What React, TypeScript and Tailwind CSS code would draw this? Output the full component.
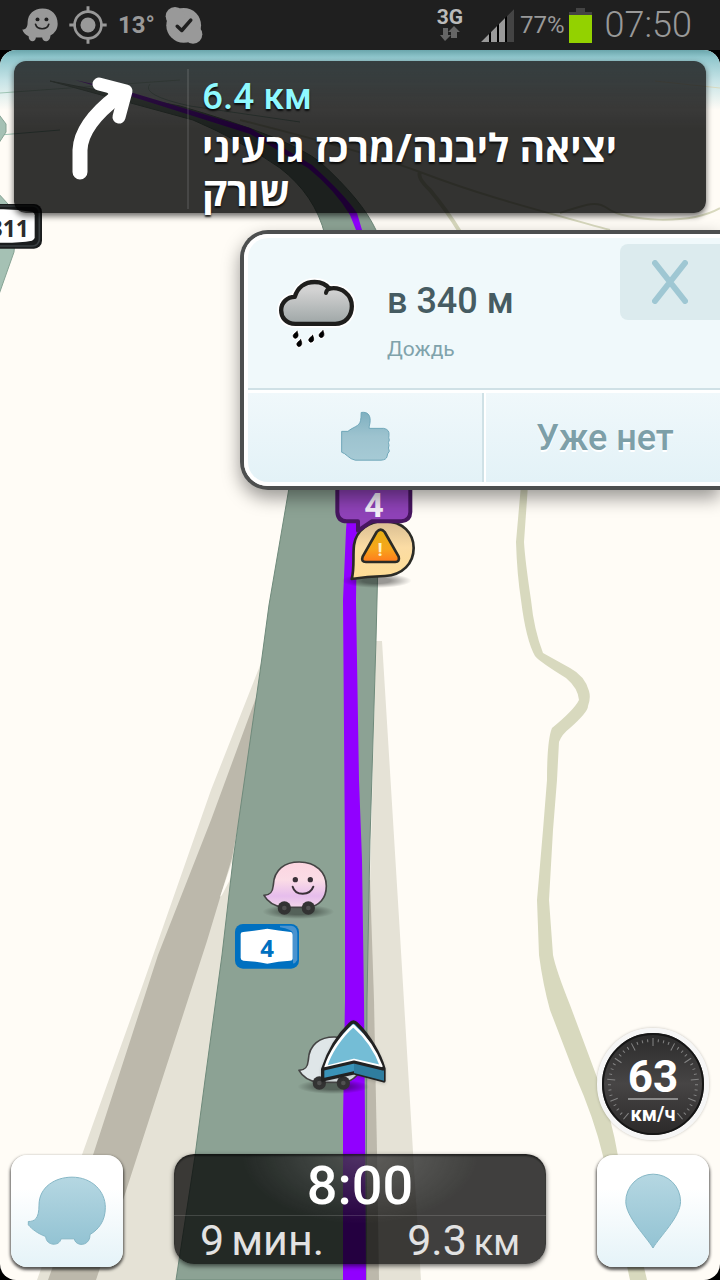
import type { ReactNode } from "react";

const WAZER_PATH =
  "M84 274 C104 274 116 265 116 225 C116 170 165 141 215 141 C275 141 315 183 315 232 C315 272 295 298 269 313 C270 350 225 350 222 326 L182 326 C178 349 138 348 136 319 C112 310 96 298 84 284 Z";

const CAR_PATH =
  "M132 166 C150 166 158 158 160 135 C162 88 195 66 238 66 C288 66 319 97 319 138 C319 175 298 198 265 202 L190 202 C162 198 142 184 132 166 Z";

const StatusBar = () => (
  <header className="flex h-[50px] items-center justify-between bg-[#1f1f1f] pl-[22px] pr-[28px] font-['Roboto',sans-serif] text-[#999]">
    <div className="flex items-center gap-[11px]">
      <svg viewBox="66 23 109 102" className="h-[34px] w-[36px]">
        <path
          d="M67 88 C79 88 83 80 83 66 C84 40 102 24 128 24 C156 24 174 43 174 70 C174 86 166 98 152 106 C152 128 128 128 127 112 L108 112 C108 127 86 128 86 108 C76 104 70 98 67 88 Z"
          fill="#999"
        />
        <circle cx="113" cy="57" r="6" fill="#1f1f1f" />
        <circle cx="140" cy="57" r="6" fill="#1f1f1f" />
        <path d="M107 72 C112 90 142 90 147 72" fill="none" stroke="#1f1f1f" strokeWidth="5" strokeLinecap="round" />
      </svg>
      <svg viewBox="207 17 116 116" className="h-[38px] w-[38px]" fill="none" stroke="#999">
        <circle cx="265" cy="75" r="41" strokeWidth="8" />
        <circle cx="265" cy="75" r="23" fill="#999" stroke="none" />
        <path d="M265 18 V38 M265 112 V132 M208 75 H228 M302 75 H322" strokeWidth="9" />
      </svg>
      <span className="w-9 text-2xl font-bold">13°</span>
      <svg viewBox="493 15 118 118" className="h-[38px] w-[38px]">
        <circle cx="551" cy="75" r="54" fill="#999" />
        <circle cx="524" cy="47" r="29" fill="#999" />
        <circle cx="580" cy="103" r="29" fill="#999" />
        <path d="M531 78 L545 91 L573 59" fill="none" stroke="#1f1f1f" strokeWidth="11" strokeLinecap="round" strokeLinejoin="round" />
      </svg>
    </div>
    <div className="flex items-center gap-[4px]">
      <div className="mr-[14px] flex flex-col items-center">
        <span className="text-[21px] leading-[18px] font-bold text-[#bbb]">3G</span>
        <svg viewBox="0 0 22 16" className="h-4 w-[22px]" fill="#666">
          <path d="M4 2 H9 V9 H12 L6 15 L1 9 H4 Z M12 12 V6 H9 L15 0 L21 6 H18 V12 Z" />
        </svg>
      </div>
      <svg viewBox="357 27 99 99" className="h-[33px] w-[33px]">
        <path d="M357 126 L456 27 V126 Z" fill="#000" />
        <path d="M357 126 L381 102 V126 Z M387 96 L405 78 V126 H387 Z M411 72 L429 54 V126 H411 Z" fill="#999" />
        <path d="M435 48 L456 27 V126 H435 Z" fill="#444" />
      </svg>
      <span className="ml-[2px] text-2xl">77%</span>
      <svg viewBox="0 0 23 35" className="h-[35px] w-[23px]">
        <path d="M7 0 H16 V4 H23 V8 H0 V4 H7 Z" fill="#444" />
        <rect y="7" width="23" height="28" fill="#93d200" />
      </svg>
      <time className="ml-[9px] text-[36px] font-light">07:50</time>
    </div>
  </header>
);

const Car = ({ fill, face }: { fill: string; face?: boolean }) => (
  <>
    <ellipse cx="235" cy="215" rx="108" ry="22" fill="url(#carShadow)" />
    <path d={CAR_PATH} fill={fill} stroke="#444" strokeWidth="5" strokeLinejoin="round" />
    <circle cx="193" cy="204" r="20" fill="#333" />
    <circle cx="265" cy="204" r="20" fill="#333" />
    <circle cx="193" cy="204" r="7" fill="#505050" />
    <circle cx="265" cy="204" r="7" fill="#505050" />
    {face && (
      <>
        <circle cx="226" cy="119" r="8" fill="#3a3038" />
        <circle cx="271" cy="119" r="8" fill="#3a3038" />
        <path d="M218 140 C226 168 270 168 280 140" fill="none" stroke="#3a3038" strokeWidth="6" strokeLinecap="round" />
      </>
    )}
  </>
);

const RoadMap = () => (
  <svg
    viewBox="0 50 720 1230"
    preserveAspectRatio="xMidYMin slice"
    className="absolute inset-0 h-full w-full"
    aria-hidden="true"
  >
    <defs>
      <linearGradient id="sky" x1="0" y1="0" x2="0" y2="1">
        <stop offset="0" stopColor="#6aa5ab" />
        <stop offset="0.12" stopColor="#8fc6cc" />
        <stop offset="0.5" stopColor="#c5e3e6" />
        <stop offset="1" stopColor="#fffcf6" />
      </linearGradient>
      <linearGradient id="pink" x1="0" y1="0" x2="0" y2="1">
        <stop offset="0" stopColor="#fcd5e0" />
        <stop offset="0.4" stopColor="#fbdce6" />
        <stop offset="0.75" stopColor="#e6bdec" />
        <stop offset="1" stopColor="#f3d6ea" />
      </linearGradient>
      <linearGradient id="amber" x1="0" y1="0" x2="0" y2="1">
        <stop offset="0" stopColor="#e4b012" />
        <stop offset="0.6" stopColor="#f7a51c" />
        <stop offset="1" stopColor="#ff7a1c" />
      </linearGradient>
      <linearGradient id="bubble" x1="0" y1="0" x2="0" y2="1">
        <stop offset="0" stopColor="#d8bd92" />
        <stop offset="0.45" stopColor="#fbdca4" />
        <stop offset="1" stopColor="#ffdd94" />
      </linearGradient>
      <radialGradient id="carShadow">
        <stop offset="0.4" stopColor="#000" stopOpacity="0.4" />
        <stop offset="1" stopColor="#000" stopOpacity="0" />
      </radialGradient>
    </defs>

    <rect y="50" width="720" height="1230" fill="#fffcf6" />
    <rect y="50" width="720" height="60" fill="url(#sky)" />

    {/* small roads near the horizon */}
    <g fill="none" stroke="#d8d9be" strokeWidth="2">
      <path d="M0 93 L180 80 M60 130 L0 135 M150 84 Q140 95 190 106 L300 122" strokeWidth="1" stroke="#9fc4b4" />
      <path d="M240 120 Q360 150 420 172 C480 195 530 208 610 230" />
      <path d="M420 172 Q417 178 430 190 Q448 212 460 232" strokeWidth="4" />
      <path d="M560 213 C580 207 595 199 607 208 C625 222 690 225 720 208" />
      <path d="M655 81 L720 88" strokeWidth="1" />
    </g>
    <g fill="#a5c1b4" stroke="#86a394">
      <path d="M-3 112 L6 124 L6 132 L-3 146 Z" />
      <path d="M-3 192 L8 204 L15 240 L14 252 L-3 300 Z" />
    </g>

    <path
      d="M521 485 L516 542 Q517 574 521 600 Q526 640 535 656 Q540 662 566 678 Q578 688 579 700 Q574 710 552 728 Q547 740 547 780 L543 830 L537 900 L539 955 Q543 985 550 1010 L575 1075 Q594 1118 603 1156 L630 1280 H647 L618 1156 Q612 1120 598 1080 L570 1005 Q556 970 553 955 L549 900 L553 830 L557 780 L559 742 Q562 734 570 728 Q588 712 588 706 Q591 698 589 691 Q585 676 570 668 L543 653 Q534 630 531 600 Q525 560 524 542 L528 485 Z"
      fill="#d8d9be"
    />

    {/* side roads under the highway */}
    <path d="M263 658 L211 790 L142 987 L83 1152 L37 1280 H240 L290 660 Z" fill="#e5e2d6" />
    <path d="M257 695 L211 820 L158 955 L94 1152 L48 1280 H96 L125 1194 L207 941 L232 858 L262 695 Z" fill="#bcb8ab" />
    <path d="M234 856 L220 897 L222 895 L236 868 Z" fill="#fffcf6" />
    <path d="M376 641 H382 L399 918 L413 1152 L421 1280 H360 Z" fill="#e5e2d6" />
    <path d="M370 880 L374 1000 L377 1152 L379 1280 H360 V880 Z" fill="#bcb8ab" />

    {/* highway and the route on it */}
    <path
      d="M50 81 L193 120 Q240 140 280 168 Q315 195 325 235 L338 300 L289 488 L269 605 L260 672 L233 860 L222 955 L205 1080 L195 1156 L176 1280 H366 L367 1000 L370 840 L376 640 L378 560 L390 300 L376 230 Q362 200 320 162 Q290 138 180 106 Z"
      fill="#8ca294"
      stroke="#6f8a7b"
    />
    <path d="M75 80 L130 92 L250 128 L312 165 Q345 195 357 213 L365 240 L376 480 L357 530 L356 600 L359 780 L362 860 L364 1000 L365 1120 L366 1280 H343 V1120 L345 1000 V860 L343 600 L346 530 L350 480 L358 235 L350 215 Q335 190 308 168 L250 134 L130 96 Z" fill="#9100ff" />

    {/* road signs */}
    <g transform="translate(0 120) scale(0.3333)">
      <rect x="-70" y="252" width="196" height="134" rx="24" fill="#1b1d1e" />
      <rect x="-64" y="258" width="182" height="120" rx="20" fill="none" stroke="#3b4043" strokeWidth="5" />
      <path d="M-50 272 Q20 262 98 276 Q104 278 104 286 V352 Q104 360 96 362 Q40 372 -50 366 Z" fill="#fff" />
    </g>
    <text x="29" y="237" textAnchor="end" fontSize="23" fill="#2c2c2c" className="font-['Noto_Sans',sans-serif] font-bold">311</text>

    <g transform="translate(220 840) scale(0.3333)">
      <rect x="45" y="252" width="192" height="134" rx="24" fill="#0070c0" />
      <path d="M180 257 H214 Q232 260 232 280 V360 Q225 372 219 370 V280 Q215 268 180 262 Z" fill="#4a93cf" />
      <path d="M62 282 Q62 276 70 276 Q110 272 142 266 Q175 272 212 276 Q218 277 218 284 V356 Q218 362 210 362 Q175 364 142 371 Q105 364 70 362 Q62 361 62 354 Z" fill="#fff" />
      <Car fill="url(#pink)" face />
    </g>
    <text x="267" y="957" textAnchor="middle" fontSize="24" fill="#0070c0" className="font-['Noto_Sans',sans-serif] font-bold">4</text>

    {/* own position */}
    <g transform="translate(255 1015) scale(0.3333)">
      <Car fill="#dfe6e8" />
    </g>
    <g transform="translate(220 840) scale(0.3333)" strokeLinejoin="round">
      <path d="M390 552 Q400 540 411 552 C450 590 480 645 492 686 V723 L402 699 L308 720 V688 C322 645 350 590 390 552 Z" fill="#3a93b8" stroke="#222" strokeWidth="10" className="drop-shadow-lg" />
      <path d="M402 668 L492 690 V722 L402 699 Z" fill="#2f7d9f" />
      <path d="M400 557 C440 592 470 640 484 679 L402 660 L317 681 C330 640 360 592 400 557 Z" fill="#74bdd6" stroke="#fff" strokeWidth="8" />
      <path d="M308 688 L402 666 L492 688" fill="none" stroke="#222" strokeWidth="9" />
    </g>

    {/* hazard pin with the route bubble */}
    <g transform="translate(270 480) scale(0.3333)" strokeLinejoin="round">
      <ellipse cx="320" cy="302" rx="105" ry="22" fill="url(#carShadow)" />
      <path d="M245 297 C254 265 248 230 252 195 C258 150 300 122 345 124 C398 124 431 160 431 204 C431 250 398 285 345 288 Q290 290 245 297 Z" fill="url(#bubble)" stroke="#2b2b26" strokeWidth="8" />
      <path d="M320 156 Q332 142 344 156 L386 230 Q390 246 376 246 H288 Q272 246 278 230 Z" fill="url(#amber)" stroke="#2b2b26" strokeWidth="8" />
      <path d="M202 0 V96 Q204 124 230 124 H264 V152 L305 124 H394 Q420 122 421 96 V0 Z" fill="#8f42b8" stroke="#471660" strokeWidth="12" />
    </g>
    <text x="380" y="556" textAnchor="middle" fontSize="19" fill="#fff3c8" className="font-['Roboto',sans-serif] font-bold">!</text>
    <text x="374" y="517" textAnchor="middle" fontSize="34" fill="#f5eefa" className="font-['Roboto',sans-serif] font-bold">4</text>
  </svg>
);

const NavPanel = () => (
  <section className="mx-[14px] mt-[11px] flex min-h-[152px] rounded-xl bg-black/80 bg-linear-to-b from-white/10 to-transparent to-45% shadow-[0_3px_6px_rgba(0,0,0,0.6)]">
    <div className="mt-2 mb-1 w-[175px] shrink-0 border-r-2 border-white/10">
      <svg viewBox="14 69 174 136" className="h-[136px] w-[174px]" fill="none" stroke="#fff" strokeLinecap="round" strokeLinejoin="round">
        <path d="M80 172 V150 Q81 124 118 96" strokeWidth="15" />
        <path d="M99 84 L126 91 L119 117" strokeWidth="13" />
        <path d="M108 88 L126 91 L120 106 Z" fill="#fff" strokeWidth="6" />
      </svg>
    </div>
    <div className="flex-1 pt-[12px] pl-[13px] pr-10 [text-shadow:0_2px_2px_rgba(0,0,0,0.8)]">
      <p className="font-['Roboto',sans-serif] text-[37px] leading-[48px] font-medium text-[#8ff9ff]">6.4 км</p>
      <p dir="rtl" lang="he" className="pt-1 text-left font-['Open_Sans','Noto_Sans',sans-serif] text-[39px] leading-[44px] font-bold text-white">
        יציאה ליבנה/מרכז גרעיני שורק
      </p>
    </div>
  </section>
);

const RainCloud = () => (
  <svg viewBox="138 170 240 220" className="h-[73px] w-[80px] shrink-0" strokeLinecap="round" strokeLinejoin="round">
    <defs>
      <linearGradient id="cloud" x1="0" y1="0" x2="0" y2="1">
        <stop offset="0.2" stopColor="#d2d2d2" />
        <stop offset="1" stopColor="#9ea6a6" />
      </linearGradient>
    </defs>
    <path d="M196 311 C166 311 153 290 153 270 C153 246 172 230 194 230 C202 202 224 185 254 185 C274 185 288 191 298 205 C336 198 366 224 366 258 C366 288 346 311 316 311 Z" fill="url(#cloud)" stroke="#fff" strokeWidth="24" />
    <path d="M196 311 C166 311 153 290 153 270 C153 246 172 230 194 230 C202 202 224 185 254 185 C274 185 288 191 298 205 C336 198 366 224 366 258 C366 288 346 311 316 311 Z" fill="url(#cloud)" stroke="#1e1e1c" strokeWidth="13" />
    <path d="M300 204 Q289 208 288 218" fill="none" stroke="#1e1e1c" strokeWidth="12" />
    {[[196, 344], [207, 369], [243, 356], [274, 342]].map(([x, y]) => (
      <g key={x}>
        <path d={`M${x + 5} ${y - 10} Q${x + 10} ${y + 8} ${x - 1} ${y + 11} Q${x - 12} ${y + 4} ${x + 5} ${y - 10} Z`} stroke="#fff" strokeWidth="10" fill="#fff" />
        <path d={`M${x + 5} ${y - 10} Q${x + 14} ${y + 8} ${x - 1} ${y + 11} Q${x - 16} ${y + 4} ${x + 5} ${y - 10} Z`} fill="#000" stroke="#000" strokeWidth="2" />
      </g>
    ))}
  </svg>
);

const AlertCard = () => (
  <section className="mt-[17px] w-2/3 self-end rounded-l-[28px] border-4 border-r-0 border-[#4d4f4f] bg-white shadow-[0_8px_18px_rgba(0,0,0,0.4)]">
    <div className="flex flex-col overflow-hidden rounded-l-[24px] border-y-4 border-l-4 border-white">
      <div className="flex h-[152px] border-b-2 border-[#cfe1e6] bg-[#f0f9fb]">
        <div className="mt-[39px] ml-[28px]">
          <RainCloud />
        </div>
        <div className="mt-[38px] ml-[31px] flex-1 font-['Roboto',sans-serif]">
          <h2 className="text-[36px] leading-[50px] font-medium text-[#465c62]">в 340 м</h2>
          <p className="mt-[11px] text-[21px] leading-6 text-[#7fa3ab]">Дождь</p>
        </div>
        <button type="button" aria-label="Закрыть" className="mt-[6px] flex h-[76px] w-[100px] items-center justify-center rounded-l-lg bg-[#dcebee]">
          <svg viewBox="0 0 36 44" className="h-11 w-9" stroke="#9fc7d3" strokeWidth="6" strokeLinecap="round">
            <path d="M3 3 L33 41 M33 3 L3 41" />
          </svg>
        </button>
      </div>
      <div className="mt-[3px] flex h-[89px]">
        <button type="button" aria-label="Подтвердить" className="flex w-1/2 items-center justify-center border-r-2 border-[#cfe1e6] bg-linear-to-b from-[#f0f8fb] to-[#e3f2f7] pb-1">
          <svg viewBox="326 566 154 156" className="h-[52px] w-[51px]">
            <defs>
              <linearGradient id="thumb" x1="0" y1="0" x2="0" y2="1">
                <stop offset="0" stopColor="#7fb0c0" />
                <stop offset="0.5" stopColor="#9dc3cf" />
                <stop offset="1" stopColor="#a6cad5" />
              </linearGradient>
            </defs>
            <path
              d="M331 630 H350 C366 616 384 616 388 598 Q390 590 390 573 C408 570 418 580 417 598 C417 608 413 615 414 621 H458 Q476 624 474 642 Q472 650 475 656 Q470 664 474 672 Q470 680 475 690 Q468 698 468 706 Q466 716 450 717 H372 Q358 714 348 704 Q340 696 331 693 Z"
              fill="url(#thumb)"
              stroke="#6fa6b8"
              strokeWidth="3"
            />
          </svg>
        </button>
        <button type="button" className="ml-[2px] flex-1 bg-linear-to-b from-[#f0f8fb] to-[#e3f2f7] pl-1 font-['Roboto',sans-serif] text-[36px] font-medium text-[#7d9fa8] [text-shadow:0_2px_0_#fff]">
          Уже нет
        </button>
      </div>
    </div>
  </section>
);

const ticks = Array.from({ length: 41 }, (_, i) => -140 + i * 7);

const Speedometer = () => (
  <div className="relative mr-[11px] mb-[15px] flex size-28 flex-col items-center self-end rounded-full border-5 border-[#f6f6f6] bg-linear-to-b from-[#2b2b2b] via-[#474545] to-[#2b2929] shadow-[0_0_3px_rgba(0,0,0,0.25)]">
    <svg viewBox="-51 -51 102 102" className="absolute inset-0 h-full w-full" aria-hidden="true">
      <circle r="50" fill="none" stroke="#161616" strokeWidth="2" />
      {ticks.map((angle, i) => (
        <path key={angle} d={i % 4 === 0 ? "M0 -46 V-38" : "M0 -45 V-42"} stroke="#858585" transform={`rotate(${angle})`} />
      ))}
    </svg>
    <span className="relative mt-[23px] border-b-2 border-[#8a8a8a] font-['Roboto',sans-serif] text-[44px] leading-[42px] font-bold text-white">63</span>
    <span className="relative mt-[2px] font-['Roboto',sans-serif] text-xl leading-6 font-bold text-white">км/ч</span>
  </div>
);

const MapButton = ({ label, children }: { label: string; children: ReactNode }) => (
  <button
    type="button"
    aria-label={label}
    className="flex size-28 shrink-0 items-center justify-center rounded-2xl bg-linear-to-b from-white from-30% to-[#e5f3f8] shadow-[0_2px_3px_1px_rgba(0,0,0,0.65)]"
  >
    {children}
  </button>
);

const EtaPanel = () => (
  <section className="mx-[51px] -mt-px flex h-[110px] flex-1 flex-col rounded-[20px] bg-black/75 bg-[radial-gradient(ellipse_at_top,rgba(255,255,255,0.2),transparent_45%)] font-['Roboto',sans-serif] shadow-[0_2px_5px_rgba(0,0,0,0.6),inset_0_2px_2px_rgba(0,0,0,0.5)]">
    <div className="h-[62px] border-b border-white/15 text-center text-[54px] leading-[64px] font-medium text-white">8:00</div>
    <div className="flex flex-1 items-baseline justify-between pr-[26px] pl-[26px] leading-[48px] text-[#e2e2e2]">
      <p className="flex items-baseline gap-[7px] text-[43px]">
        <span>9</span>
        <span>мин.</span>
      </p>
      <p className="flex items-baseline gap-[7px] text-[43px]">
        <span>9.3</span>
        <span className="text-[36px]">км</span>
      </p>
    </div>
  </section>
);

export default function App() {
  return (
    <div className="flex min-h-screen flex-col bg-black">
      <StatusBar />
      <main className="relative flex flex-1 flex-col overflow-hidden rounded-2xl">
        <RoadMap />
        <div className="relative flex flex-1 flex-col">
          <NavPanel />
          <AlertCard />
          <div className="flex-1" />
          <Speedometer />
          <footer className="flex items-start px-[11px] pb-[13px]">
            <MapButton label="Меню">
              <svg viewBox="80 135 240 215" className="h-[72px] w-[80px]">
                <defs>
                  <linearGradient id="aqua" x1="0" y1="0" x2="0" y2="1">
                    <stop offset="0" stopColor="#b5d7e2" />
                    <stop offset="1" stopColor="#93c3d3" />
                  </linearGradient>
                </defs>
                <path d={WAZER_PATH} fill="url(#aqua)" stroke="#85b6c5" strokeWidth="3" />
              </svg>
            </MapButton>
            <EtaPanel />
            <MapButton label="Сообщить">
              <svg viewBox="130 485 180 235" className="h-[78px] w-[60px]">
                <path d="M220 714 C200 680 138 620 138 574 A82 82 0 0 1 303 574 C303 620 240 680 220 714 Z" fill="url(#aqua)" stroke="#85b6c5" strokeWidth="3" />
              </svg>
            </MapButton>
          </footer>
        </div>
      </main>
    </div>
  );
}
